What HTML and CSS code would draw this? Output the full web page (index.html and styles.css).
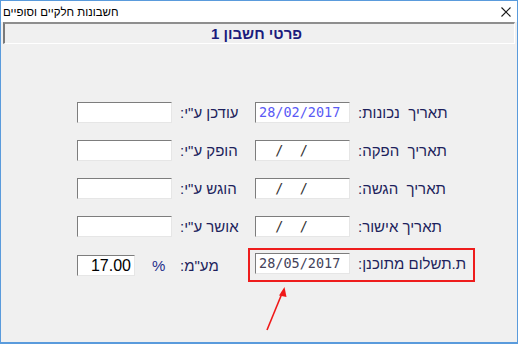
FILE: index.html
```html
<!DOCTYPE html>
<html lang="he">
<head>
<meta charset="utf-8">
<link rel="stylesheet" href="styles.css">
</head>
<body>
<div class="window">
  <div class="titlebar">
    <span class="title" dir="rtl">חשבונות חלקיים וסופיים</span>
    <svg class="close" width="10" height="10" viewBox="0 0 10 10"><path d="M0.5 0.5 L9.5 9.5 M9.5 0.5 L0.5 9.5" stroke="#1a1a1a" stroke-width="1.1" fill="none"/></svg>
  </div>
  <div class="client">
    <div class="band" dir="rtl">פרטי חשבון 1</div>
    <div class="form">
      <div class="row">
        <div class="field"></div>
        <div class="lbl lbl-left" dir="rtl">עודכן ע"י:</div>
        <div class="group">
          <div class="field date date-blue">28/02/2017</div>
          <div class="lbl lbl-right" dir="rtl">תאריך  נכונות:</div>
        </div>
      </div>
      <div class="row">
        <div class="field"></div>
        <div class="lbl lbl-left" dir="rtl">הופק ע"י:</div>
        <div class="group">
          <div class="field date">  /  /    </div>
          <div class="lbl lbl-right" dir="rtl">תאריך  הפקה:</div>
        </div>
      </div>
      <div class="row">
        <div class="field"></div>
        <div class="lbl lbl-left" dir="rtl">הוגש ע"י:</div>
        <div class="group">
          <div class="field date">  /  /    </div>
          <div class="lbl lbl-right" dir="rtl">תאריך  הגשה:</div>
        </div>
      </div>
      <div class="row">
        <div class="field"></div>
        <div class="lbl lbl-left" dir="rtl">אושר ע"י:</div>
        <div class="group">
          <div class="field date">  /  /    </div>
          <div class="lbl lbl-right" dir="rtl">תאריך אישור:</div>
        </div>
      </div>
      <div class="row row-planned">
        <div class="vat">
          <div class="field field-small">17.00</div>
          <span class="pct">%</span>
        </div>
        <div class="lbl lbl-left" dir="rtl">מע"מ:</div>
        <div class="group group-marked">
          <div class="field date date-gray">28/05/2017</div>
          <div class="lbl lbl-right" dir="rtl">ת.תשלום מתוכנן:</div>
        </div>
      </div>
    </div>
  </div>
  <svg class="arrow" width="518" height="344" viewBox="0 0 518 344">
    <path d="M267 330 L283 291" stroke="#f01818" stroke-width="1.6" fill="none"/>
    <path d="M284.5 287 L279 295.5 L286.5 297 Z" fill="#f01818"/>
  </svg>
</div>
</body>
</html>
```

FILE: styles.css
```css
* { box-sizing: border-box; }
html, body { margin: 0; padding: 0; }
body {
  width: 518px;
  height: 344px;
  overflow: hidden;
  font-family: "Liberation Sans", Arial, sans-serif;
}
.window {
  position: relative;
  width: 518px;
  height: 344px;
  border: 1px solid #5a9bdc;
  border-bottom-width: 2px;
  background: #f0f0f0;
  display: flex;
  flex-direction: column;
}
.titlebar {
  height: 21px;
  background: #ffffff;
  display: flex;
  align-items: center;
  justify-content: space-between;
  padding: 0 6px 0 2px;
  direction: ltr;
}
.title {
  font-size: 11.5px;
  color: #000;
}
.close { display: block; }
.client {
  flex: 1;
  display: flex;
  flex-direction: column;
}
.band {
  margin: 0 2px 0 2px;
  height: 22px;
  border-top: 2px solid #8e8e8e;
  border-left: 2px solid #7a7a7a;
  border-bottom: 1px solid #ffffff;
  border-right: 1px solid #ffffff;
  background: #f0f0f0;
  font-size: 15px;
  font-weight: bold;
  color: #1b1b7c;
  display: flex;
  align-items: center;
  justify-content: center;
  padding-right: 6px;
}
.form {
  display: flex;
  flex-direction: column;
  padding: 58px 0 0 76px;
  direction: ltr;
}
.row {
  display: flex;
  align-items: center;
  height: 21px;
}
.row + .row { margin-top: 17px; }
.row.row-planned {
  margin-top: 11px;
  height: 34px;
}
.field {
  width: 95px;
  height: 21px;
  background: #ffffff;
  border: 1px solid;
  border-color: #7d7d7d #e6e6e6 #e6e6e6 #7d7d7d;
  flex: none;
}
.field-small {
  width: 58px;
  font-size: 16px;
  color: #000;
  text-align: right;
  padding-right: 3px;
  line-height: 19px;
}
.vat {
  width: 95px;
  display: flex;
  align-items: center;
  flex: none;
}
.pct {
  margin-left: 17px;
  font-size: 15px;
  color: #1f2f8a;
}
.lbl {
  font-size: 15px;
  color: #1d1f5c;
  white-space: pre;
}
.lbl-left {
  width: 76px;
  flex: none;
  text-align: left;
  padding-left: 8px;
}
.group {
  display: flex;
  align-items: center;
  border: 2px solid transparent;
  border-top-width: 0;
  border-bottom-width: 0;
  padding: 0 7px 0 5px;
}
.group-marked {
  border: 2px solid #ee1c1c;
  padding: 3px 7px 6px 5px;
}
.lbl-right { margin-left: 8px; }
.date {
  font-family: "DejaVu Sans Mono", "Liberation Mono", monospace;
  font-size: 13.5px;
  line-height: 19px;
  white-space: pre;
  padding-left: 3px;
  color: #333;
}
.date-blue { color: #5a5af5; }
.date-gray { color: #45435a; }
.arrow {
  position: absolute;
  left: -1px;
  top: -1px;
  pointer-events: none;
}
```
